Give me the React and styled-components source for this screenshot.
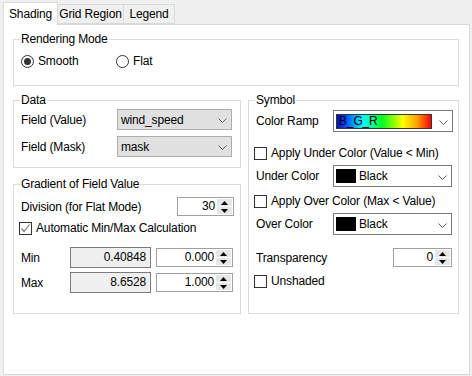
import React, { useState } from 'react';
import styled, { createGlobalStyle } from 'styled-components';

const GlobalStyle = createGlobalStyle`
  html, body {
    margin: 0;
    padding: 0;
    background: #f0f0f0;
  }
  body {
    font-family: "Liberation Sans", Arial, sans-serif;
    font-size: 12px;
    letter-spacing: -0.15px;
    color: #000;
  }
`;

const Chevron = () => (
  <svg width="9" height="5" viewBox="0 0 9 5">
    <polyline points="0.5,0.5 4.5,4.5 8.5,0.5" fill="none" stroke="#606060" strokeWidth="1" />
  </svg>
);

const SpinArrows = () => (
  <SpinButtons>
    <SpinHalf>
      <svg width="7" height="4" viewBox="0 0 7 4">
        <polygon points="3.5,0 7,4 0,4" fill="#000" />
      </svg>
    </SpinHalf>
    <SpinHalf>
      <svg width="7" height="4" viewBox="0 0 7 4">
        <polygon points="0,0 7,0 3.5,4" fill="#000" />
      </svg>
    </SpinHalf>
  </SpinButtons>
);

const Combo = ({ value, width }) => (
  <ComboBox style={{ width }}>
    <ComboText>{value}</ComboText>
    <ComboArrow><Chevron /></ComboArrow>
  </ComboBox>
);

const ColorCombo = ({ label, color }) => (
  <ColorComboBox>
    <Swatch $color={color} />
    <ComboText>{label}</ComboText>
    <ComboArrow><Chevron /></ComboArrow>
  </ColorComboBox>
);

const RampCombo = ({ name }) => (
  <ColorComboBox>
    <Ramp>{name}</Ramp>
    <ComboArrow><Chevron /></ComboArrow>
  </ColorComboBox>
);

const Spinner = ({ value, width }) => (
  <SpinBox style={{ width }}>
    <SpinValue>{value}</SpinValue>
    <SpinArrows />
  </SpinBox>
);

const Check = ({ checked, label }) => (
  <CheckRow>
    <CheckBox>
      {checked && (
        <svg width="11" height="11" viewBox="0 0 11 11">
          <polyline points="1.5,5.5 4,8.5 9.5,1.5" fill="none" stroke="#7a7a7a" strokeWidth="1.2" />
        </svg>
      )}
    </CheckBox>
    <span>{label}</span>
  </CheckRow>
);

const Radio = ({ checked, label, onClick }) => (
  <RadioRow onClick={onClick}>
    <RadioCircle>{checked && <RadioDot />}</RadioCircle>
    <span>{label}</span>
  </RadioRow>
);

const tabs = [
  { name: 'Shading', width: 55 },
  { name: 'Grid Region', width: 66 },
  { name: 'Legend', width: 51 },
];

const App = () => {
  const [mode, setMode] = useState('smooth');

  return (
    <Window>
      <GlobalStyle />
      <TabStrip>
        {tabs.map((t, i) => (
          <Tab key={t.name} $active={i === 0} $w={t.width}>{t.name}</Tab>
        ))}
      </TabStrip>
      <Page>
        <Group>
          <Caption>Rendering Mode</Caption>
          <RadioLine>
            <Radio checked={mode === 'smooth'} label="Smooth" onClick={() => setMode('smooth')} />
            <Radio checked={mode === 'flat'} label="Flat" onClick={() => setMode('flat')} />
          </RadioLine>
        </Group>

        <Columns>
          <LeftColumn>
            <Group>
              <Caption>Data</Caption>
              <FieldRow $top={2}>
                <FieldLabel $w={96}>Field (Value)</FieldLabel>
                <Combo value="wind_speed" width={115} />
              </FieldRow>
              <FieldRow $top={6}>
                <FieldLabel $w={96}>Field (Mask)</FieldLabel>
                <Combo value="mask" width={115} />
              </FieldRow>
              <Filler $h={10} />
            </Group>

            <Group>
              <Caption>Gradient of Field Value</Caption>
              <FieldRow $top={6} $between>
                <span>Division (for Flat Mode)</span>
                <Spinner value="30" width={57} />
              </FieldRow>
              <CheckLine $top={5}>
                <Check checked label="Automatic Min/Max Calculation" />
              </CheckLine>
              <FieldRow $top={12}>
                <FieldLabel $w={49}>Min</FieldLabel>
                <ReadOnlyBox>0.40848</ReadOnlyBox>
                <Spinner value="0.000" width={77} />
              </FieldRow>
              <FieldRow $top={4}>
                <FieldLabel $w={49}>Max</FieldLabel>
                <ReadOnlyBox>8.6528</ReadOnlyBox>
                <Spinner value="1.000" width={77} />
              </FieldRow>
            </Group>
          </LeftColumn>

          <Group $grow>
            <Caption>Symbol</Caption>
            <FieldRow $top={3}>
              <FieldLabel $w={77}>Color Ramp</FieldLabel>
              <RampCombo name="B_G_R" />
            </FieldRow>
            <CheckLine $top={14}>
              <Check label="Apply Under Color (Value < Min)" />
            </CheckLine>
            <FieldRow $top={5}>
              <FieldLabel $w={77}>Under Color</FieldLabel>
              <ColorCombo label="Black" color="#000" />
            </FieldRow>
            <CheckLine $top={7}>
              <Check label="Apply Over Color (Max < Value)" />
            </CheckLine>
            <FieldRow $top={5}>
              <FieldLabel $w={77}>Over Color</FieldLabel>
              <ColorCombo label="Black" color="#000" />
            </FieldRow>
            <FieldRow $top={13} $between>
              <span>Transparency</span>
              <Spinner value="0" width={59} />
            </FieldRow>
            <CheckLine $top={7}>
              <Check label="Unshaded" />
            </CheckLine>
          </Group>
        </Columns>
      </Page>
    </Window>
  );
};

const Window = styled.div`
  width: 472px;
  height: 376px;
  background: #f0f0f0;
  display: flex;
  flex-direction: column;
  box-sizing: border-box;
  padding: 2px 2px 1px 3px;
`;

const TabStrip = styled.div`
  display: flex;
  align-items: flex-end;
  height: 22px;
  position: relative;
  z-index: 1;
`;

const Tab = styled.div`
  box-sizing: border-box;
  width: ${(p) => p.$w}px;
  text-align: center;
  border: 1px solid #d9d9d9;
  border-left-width: ${(p) => (p.$active ? '1px' : '0')};
  background: ${(p) => (p.$active ? '#fff' : '#f0f0f0')};
  height: ${(p) => (p.$active ? '23px' : '20px')};
  line-height: ${(p) => (p.$active ? '22px' : '19px')};
  border-bottom: ${(p) => (p.$active ? 'none' : '1px solid #d9d9d9')};
  margin-bottom: ${(p) => (p.$active ? '-1px' : '0')};
  white-space: nowrap;
`;

const Page = styled.div`
  flex: 1;
  background: #fff;
  border: 1px solid #d9d9d9;
  box-sizing: border-box;
  padding: 7px 10px 60px 9px;
  display: flex;
  flex-direction: column;
  gap: 7px;
`;

const Group = styled.fieldset`
  margin: 0;
  min-width: 0;
  border: 1px solid #dcdcdc;
  padding: 0 6px 0 7px;
  display: flex;
  flex-direction: column;
  ${(p) => (p.$grow ? 'flex: 1;' : '')}
`;

const Caption = styled.legend`
  padding: 0 1px;
  margin-left: -1px;
  line-height: 14px;
`;

const RadioLine = styled.div`
  display: flex;
  padding: 8px 0 17px 0;
`;

const RadioRow = styled.label`
  display: flex;
  align-items: center;
  gap: 4px;
  width: 95px;
  cursor: default;
`;

const RadioCircle = styled.span`
  width: 11px;
  height: 11px;
  border: 1px solid #333;
  border-radius: 50%;
  display: flex;
  align-items: center;
  justify-content: center;
  background: #fff;
`;

const RadioDot = styled.span`
  width: 7px;
  height: 7px;
  border-radius: 50%;
  background: #333;
`;

const Columns = styled.div`
  display: flex;
  gap: 7px;
  flex: 1;
`;

const LeftColumn = styled.div`
  width: 228px;
  display: flex;
  flex-direction: column;
  gap: 9px;

  & > fieldset:last-child {
    flex: 1;
  }
`;

const FieldRow = styled.div`
  display: flex;
  align-items: center;
  margin-top: ${(p) => p.$top || 0}px;
  ${(p) => (p.$between ? 'justify-content: space-between;' : '')}
`;

const FieldLabel = styled.span`
  width: ${(p) => p.$w}px;
  flex-shrink: 0;
`;

const Filler = styled.div`
  height: ${(p) => p.$h}px;
`;

const ComboBox = styled.div`
  box-sizing: border-box;
  height: 21px;
  border: 1px solid #adadad;
  background: #e1e1e1;
  display: flex;
  align-items: center;
  padding-left: 3px;
`;

const ColorComboBox = styled.div`
  box-sizing: border-box;
  width: 120px;
  height: 22px;
  border: 1px solid #7a7a7a;
  background: #fff;
  display: flex;
  align-items: center;
  padding-left: 2px;
  gap: 3px;
`;

const ComboText = styled.span`
  flex: 1;
  white-space: nowrap;
`;

const ComboArrow = styled.span`
  width: 17px;
  display: flex;
  justify-content: center;
  align-items: center;
  padding-top: 2px;
`;

const Swatch = styled.span`
  width: 20px;
  height: 14px;
  background: ${(p) => p.$color};
`;

const Ramp = styled.span`
  width: 99px;
  height: 15px;
  box-sizing: border-box;
  border: 1px solid #333;
  line-height: 13px;
  padding-left: 2px;
  background: linear-gradient(
    to right,
    #0010b0 0%,
    #0040ff 8%,
    #00ffff 28%,
    #00ff20 48%,
    #a0ff00 62%,
    #ffff00 70%,
    #ffa000 85%,
    #ff0000 100%
  );
`;

const SpinBox = styled.div`
  box-sizing: border-box;
  height: 19px;
  border: 1px solid #a0a0a0;
  background: #fff;
  display: flex;
  align-items: stretch;
`;

const SpinValue = styled.span`
  flex: 1;
  text-align: right;
  line-height: 17px;
  padding-right: 2px;
`;

const SpinButtons = styled.span`
  width: 15px;
  display: flex;
  flex-direction: column;
  gap: 1px;
  padding: 1px 1px 1px 0;
`;

const SpinHalf = styled.span`
  flex: 1;
  background: #e6e6e6;
  display: flex;
  align-items: center;
  justify-content: center;
`;

const ReadOnlyBox = styled.div`
  box-sizing: border-box;
  width: 81px;
  height: 21px;
  margin-right: 5px;
  border: 1px solid #7a7a7a;
  background: #f0f0f0;
  text-align: right;
  line-height: 19px;
  padding-right: 4px;
`;

const CheckLine = styled.div`
  margin-top: ${(p) => p.$top || 0}px;
`;

const CheckRow = styled.label`
  display: flex;
  align-items: center;
  gap: 4px;
  margin-left: -2px;
`;

const CheckBox = styled.span`
  box-sizing: border-box;
  width: 13px;
  height: 13px;
  border: 1px solid #333;
  background: #fff;
  display: flex;
  align-items: center;
  justify-content: center;
`;

export default App;
